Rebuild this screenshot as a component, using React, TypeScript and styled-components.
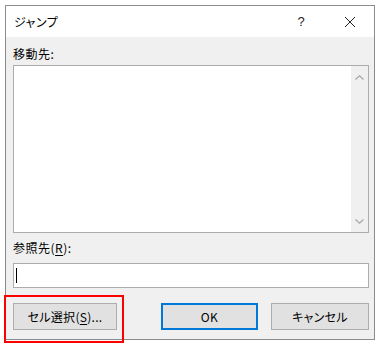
import * as React from "react"
import styled, {createGlobalStyle} from "styled-components"

const GlobalStyle = createGlobalStyle`
  html, body {
    margin: 0;
    padding: 0;
    background: #ffffff;
  }
  body {
    font-family: "Noto Sans CJK JP", "Noto Sans", sans-serif;
    font-feature-settings: "palt";
    color: #000000;
  }
`

const Chevron = ({up}: {up?: boolean}) => (
  <svg width="9" height="5" viewBox="0 0 9 5">
    <path
      d={up ? "M0.5 4.5 L4.5 0.8 L8.5 4.5" : "M0.5 0.5 L4.5 4.2 L8.5 0.5"}
      fill="none"
      stroke="#a6a6a6"
      strokeWidth="1.2"
    />
  </svg>
)

const CloseIcon = () => (
  <svg width="12" height="12" viewBox="0 0 12 12">
    <path d="M1 1 L11 11 M11 1 L1 11" stroke="#222" strokeWidth="1" fill="none"/>
  </svg>
)

const App = () => {
  return (
    <>
      <GlobalStyle/>
      <Page>
        <Dialog>
          <TitleBar>
            <Title>ジャンプ</Title>
            <TitleButtons>
              <Help>?</Help>
              <Close><CloseIcon/></Close>
            </TitleButtons>
          </TitleBar>

          <Body>
            <Label>移動先:</Label>
            <ListBox>
              <ListArea/>
              <ScrollBar>
                <Chevron up/>
                <Chevron/>
              </ScrollBar>
            </ListBox>

            <Label>参照先(<u>R</u>):</Label>
            <TextInput>
              <Caret/>
            </TextInput>

            <ButtonRow>
              <Highlight>
                <Button width={104}>セル選択(<u>S</u>)...</Button>
                <RedBox/>
              </Highlight>
              <Right>
                <Button width={97} primary>OK</Button>
                <Button width={98}>キャンセル</Button>
              </Right>
            </ButtonRow>
          </Body>
        </Dialog>
      </Page>
    </>
  )
}

const Page = styled.div`
  width: 382px;
  height: 352px;
  padding: 5px 0 0 5px;
  box-sizing: border-box;
  background: #ffffff;
`
const Dialog = styled.div`
  width: 370px;
  height: 335px;
  box-sizing: border-box;
  border: 1px solid #8c8c8c;
  display: flex;
  flex-direction: column;
  background: #f0f0f0;
`
const TitleBar = styled.div`
  height: 31px;
  background: #ffffff;
  display: flex;
  align-items: center;
  justify-content: space-between;
  padding-left: 8px;
`
const Title = styled.div`
  font-size: 12px;
  color: #000;
  letter-spacing: 0.5px;
`
const TitleButtons = styled.div`
  display: flex;
  align-items: center;
  height: 100%;
`
const Help = styled.div`
  width: 46px;
  font-size: 13px;
  text-align: center;
  font-family: "Liberation Sans", sans-serif;
  color: #222;
  margin-right: 3px;
`
const Close = styled.div`
  width: 46px;
  display: flex;
  justify-content: center;
  margin-right: 1px;
`
const Body = styled.div`
  flex: 1;
  padding: 8px 5px 0 7px;
  display: flex;
  flex-direction: column;
`
const Label = styled.div`
  font-size: 12px;
  line-height: 18px;
  height: 20px;
  letter-spacing: 0.5px;

  & u {
    text-underline-offset: 2px;
  }
`
const ListBox = styled.div`
  height: 168px;
  box-sizing: border-box;
  border: 1px solid #acacac;
  background: #ffffff;
  display: flex;
  margin-bottom: 6px;
`
const ListArea = styled.div`
  flex: 1;
`
const ScrollBar = styled.div`
  width: 17px;
  background: #f0f0f0;
  display: flex;
  flex-direction: column;
  justify-content: space-between;
  align-items: center;
  padding: 9px 0 8px;
`
const TextInput = styled.div`
  height: 25px;
  box-sizing: border-box;
  border: 1px solid #acacac;
  background: #ffffff;
  display: flex;
  align-items: center;
  padding-left: 2px;
  margin-top: 4px;
`
const Caret = styled.div`
  width: 1px;
  height: 15px;
  background: #000;
`
const ButtonRow = styled.div`
  display: flex;
  justify-content: space-between;
  margin-top: 15px;
`
const Right = styled.div`
  display: flex;
  gap: 13px;
`
const Highlight = styled.div`
  position: relative;
`
const Button = styled.div<{width: number, primary?: boolean}>`
  width: ${p => p.width}px;
  height: 27px;
  box-sizing: border-box;
  background: #e1e1e1;
  border: ${p => p.primary ? "2px solid #0078d7" : "1px solid #adadad"};
  display: flex;
  align-items: center;
  justify-content: center;
  font-size: 12px;
  letter-spacing: 0.3px;
  color: #000;

  & u {
    text-underline-offset: 2px;
  }
`
const RedBox = styled.div`
  position: absolute;
  left: -9px;
  top: -8px;
  width: 120px;
  height: 48px;
  box-sizing: border-box;
  border: 2px solid #ff0000;
`

export default App
